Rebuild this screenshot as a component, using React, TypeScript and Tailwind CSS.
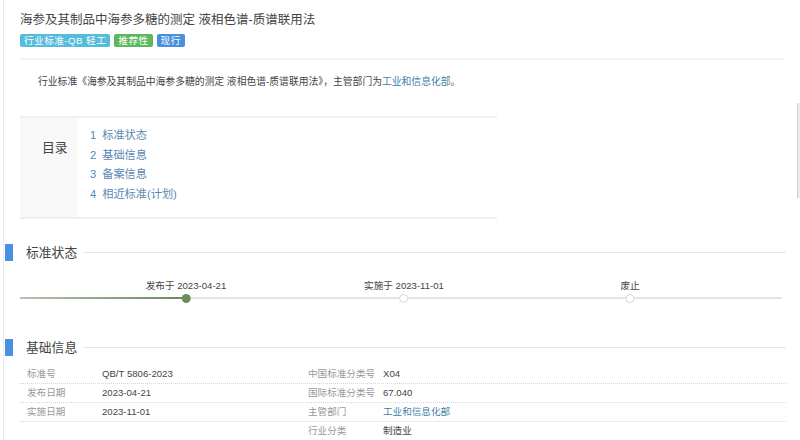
import React from "react";

const font = { fontFamily: '"Liberation Sans", "Noto Sans CJK SC", sans-serif' };

function SectionHeader({ title }: { title: string }) {
  return (
    <div className="flex items-center h-[17px] pl-[1px]">
      <div className="w-[8px] h-[17px] bg-[#4a90e2]"></div>
      <span className="ml-[13px] text-[12.8px] leading-[17px] text-[#444]">{title}</span>
      <div className="flex-1 ml-[6px] h-px bg-[#e6e6e6]"></div>
    </div>
  );
}

const marks = [
  { left: 166, label: "发布于 2023-04-21", done: true },
  { left: 384, label: "实施于 2023-11-01", done: false },
  { left: 610, label: "废止", done: false },
];

const rows = [
  { l: "标准号", lv: "QB/T 5806-2023", r: "中国标准分类号", rv: "X04" },
  { l: "发布日期", lv: "2023-04-21", r: "国际标准分类号", rv: "67.040" },
  { l: "实施日期", lv: "2023-11-01", r: "主管部门", rv: "工业和信息化部", link: true },
  { l: "", lv: "", r: "行业分类", rv: "制造业" },
];

const toc = ["标准状态", "基础信息", "备案信息", "相近标准(计划)"];

export default function App() {
  return (
    <div className="w-[800px] h-[440px] bg-white overflow-hidden relative" style={font}>
      <div className="ml-[3px] h-full border-l border-[#e8e8e8] pr-[14px]">
        <div className="pl-[16px] pt-[10px]">
          <h1 className="text-[12.5px] leading-[20px] text-[#444] font-normal">
            海参及其制品中海参多糖的测定 液相色谱-质谱联用法
          </h1>
          <div className="flex gap-[4px] mt-[4px]">
            <span className="h-[13px] px-[4px] rounded-[2px] bg-[#55bcdc] text-white text-[9.6px] leading-[13px] tracking-[0.5px]">
              行业标准-QB 轻工
            </span>
            <span className="h-[13px] px-[4px] rounded-[2px] bg-[#5cb85c] text-white text-[9.6px] leading-[13px] tracking-[0.5px]">
              推荐性
            </span>
            <span className="h-[13px] px-[4px] rounded-[2px] bg-[#4a8fdc] text-white text-[9.6px] leading-[13px] tracking-[0.5px]">
              现行
            </span>
          </div>
          <div className="mt-[11px] h-[2px] bg-[#f2f2f2] mr-[3px]"></div>
          <p className="mt-[14px] pl-[18px] text-[9.8px] leading-[16px] text-[#444]">
            行业标准《海参及其制品中海参多糖的测定 液相色谱-质谱联用法》，主管部门为
            <span className="text-[#3f80a6]">工业和信息化部</span>。
          </p>
          <div className="mt-[26px] w-[477px] h-[103px] flex border-t-2 border-b-2 border-[#f0f0f0]">
            <div className="w-[58px] bg-[#f8f8f8] pl-[22px] pt-[17px]">
              <span className="text-[12.8px] leading-[20px] text-[#444]">目录</span>
            </div>
            <ul className="pl-[12px] pt-[8px] text-[11.2px] leading-[19.5px] text-[#5a88b3]">
              {toc.map((t, i) => (
                <li key={t}>
                  <span className="mr-[6px]">{i + 1}</span>
                  {t}
                </li>
              ))}
            </ul>
          </div>
        </div>

        <div className="mt-[25px]">
          <SectionHeader title="标准状态" />
        </div>

        <div className="mt-[18px] ml-[16px] mr-[4px] relative h-[28px]">
          <div className="absolute left-0 right-0 top-[18px] h-[2px] bg-[#e4e4e4]"></div>
          <div className="absolute left-0 w-[166px] top-[18px] h-[2px] bg-gradient-to-r from-[#b5c2af] to-[#6a8a5e]"></div>
          {marks.map((m) => (
            <div
              key={m.label}
              className="absolute top-0 flex flex-col items-center -translate-x-1/2"
              style={{ left: m.left }}
            >
              <span className="text-[9.6px] leading-[14px] text-[#444] whitespace-nowrap">{m.label}</span>
              {m.done ? (
                <span className="mt-[1px] w-[9px] h-[9px] rounded-full bg-[#6a8f5f]"></span>
              ) : (
                <span className="mt-[1px] w-[9px] h-[9px] rounded-full bg-white border border-[#d8d8d8]"></span>
              )}
            </div>
          ))}
        </div>

        <div className="mt-[32px]">
          <SectionHeader title="基础信息" />
        </div>

        <div className="mt-[9px] ml-[16px] text-[9.6px]">
          {rows.map((r, i) => (
            <div key={i} className="grid grid-cols-[280px_1fr] h-[19px] border-b border-dotted border-[#d6d6d6] items-center">
              <div className="grid grid-cols-[82px_1fr]">
                <span className="pl-[7px] text-[#999]">{r.l}</span>
                <span className="text-[#444]">{r.lv}</span>
              </div>
              <div className="grid grid-cols-[83px_1fr]">
                <span className="pl-[8px] text-[#999]">{r.r}</span>
                <span className={r.link ? "text-[#3f80a6]" : "text-[#444]"}>{r.rv}</span>
              </div>
            </div>
          ))}
        </div>
      </div>
      <div className="absolute right-0 top-[103px] w-[3px] h-[95px] bg-[#ececec] border-l border-[#d0d0d0]"></div>
    </div>
  );
}
